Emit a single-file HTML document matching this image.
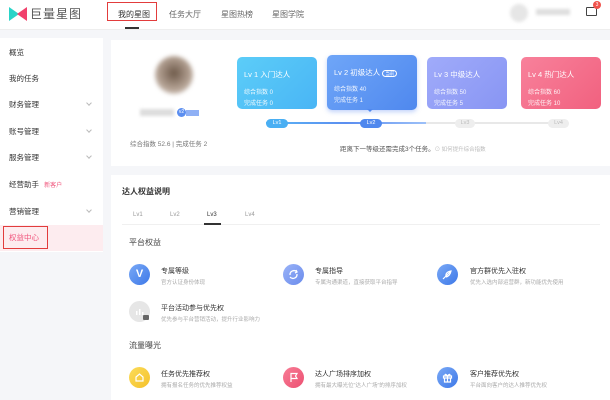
<!DOCTYPE html>
<html><head><meta charset="utf-8"><style>
*{margin:0;padding:0;box-sizing:border-box}
body{width:610px;height:400px;overflow:hidden;background:#f5f6f9;font-family:"Liberation Sans","Noto Sans CJK SC",sans-serif;color:#333;position:relative}
.abs{position:absolute}
.hdr{left:0;top:0;width:610px;height:30px;background:#fff;border-bottom:1px solid #eee}
.nav{font-size:8px;color:#666;top:9px}
.side{left:0;top:38px;width:103px;height:214px;background:#fff}
.si{position:absolute;left:9px;font-size:7.5px;color:#333}
.chev{position:absolute;left:87px;width:4px;height:4px;border-right:1px solid #bbb;border-bottom:1px solid #bbb;transform:rotate(45deg)}
.card{background:#fff}
.lv{border-radius:5px;color:#fff;font-size:7px}
.lv .t{position:absolute;left:7px;top:12px;font-size:7.5px}
.lv .a{position:absolute;left:7px;top:30px;font-size:6px;opacity:.9}
.lv .b{position:absolute;left:7px;top:41px;font-size:6px;opacity:.9}
.pill{height:9px;border-radius:5px;font-size:5.5px;text-align:center;line-height:9px;top:119px}
.ic{width:21px;height:21px;border-radius:50%}
.ic svg{position:absolute;left:5px;top:5px}
.it{font-size:7px;color:#333}
.id{font-size:5.5px;color:#aaa}
</style></head><body>
<div class="abs hdr"></div>
<svg class="abs" style="left:8px;top:6px" width="20" height="16" viewBox="0 0 20 16"><path d="M1 1 L11 8 L1 15 Z" fill="#2ad4c8"/><path d="M19 1 L9 8 L19 15 Z" fill="#f1416c"/></svg>
<div class="abs" style="left:30px;top:5px;font-size:12px;color:#555;letter-spacing:1px">巨量星图</div>
<div class="abs" style="left:107px;top:2px;width:50px;height:19px;border:1.5px solid #e23c3c"></div>
<div class="abs nav" style="left:118px;color:#333">我的星图</div>
<div class="abs" style="left:125px;top:27px;width:14px;height:2px;background:#333"></div>
<div class="abs nav" style="left:169px">任务大厅</div>
<div class="abs nav" style="left:221px">星图热榜</div>
<div class="abs nav" style="left:272px">星图学院</div>
<div class="abs" style="left:510px;top:4px;width:18px;height:18px;border-radius:50%;background:#e6e6e6;filter:blur(1.5px)"></div>
<div class="abs" style="left:536px;top:9px;width:34px;height:6px;background:#ddd;filter:blur(1.5px)"></div>
<div class="abs" style="left:586px;top:7px;width:11px;height:9px;border:1.3px solid #444;border-radius:1px"></div>
<div class="abs" style="left:593px;top:1px;width:8px;height:8px;border-radius:50%;background:#f0524c;color:#fff;font-size:5px;text-align:center;line-height:8px">3</div>

<div class="abs side"></div>
<div class="si" style="top:47px">概览</div>
<div class="si" style="top:73px">我的任务</div>
<div class="si" style="top:99px">财务管理</div><div class="chev" style="top:101px"></div>
<div class="si" style="top:126px">账号管理</div><div class="chev" style="top:128px"></div>
<div class="si" style="top:152px">服务管理</div><div class="chev" style="top:154px"></div>
<div class="si" style="top:179px">经营助手 <span style="font-size:6px;color:#f0527a;margin-left:3px">新客户</span></div>
<div class="si" style="top:206px">营销管理</div><div class="chev" style="top:208px"></div>
<div class="abs" style="left:0;top:225px;width:103px;height:26px;background:#fdecef"></div>
<div class="abs" style="left:3px;top:226px;width:45px;height:23px;border:1.5px solid #e23c3c"></div>
<div class="si" style="top:232px;color:#f0527a">权益中心</div>

<div class="abs card" style="left:111px;top:40px;width:499px;height:126px"></div>
<div class="abs" style="left:155px;top:56px;width:38px;height:38px;border-radius:50%;background:radial-gradient(circle at 50% 45%,#6e5a4a,#b8a698 60%,#eee);filter:blur(2px)"></div>
<div class="abs" style="left:140px;top:109px;width:34px;height:7px;background:#ddd;filter:blur(1.5px)"></div>
<div class="abs" style="left:177px;top:108px;width:9px;height:9px;border-radius:50%;background:#5b8ef0;color:#fff;font-size:5px;text-align:center;line-height:9px">v2</div>
<div class="abs" style="left:186px;top:110px;width:13px;height:6px;background:#8fb0f5"></div>
<div class="abs" style="left:130px;top:138px;font-size:6.5px;color:#777">综合指数 52.6 | 完成任务 2</div>

<div class="abs lv" style="left:237px;top:57px;width:80px;height:52px;background:linear-gradient(135deg,#5ccdf8,#49b5f5)"><div class="t">Lv 1 入门达人</div><div class="a">综合指数 0</div><div class="b">完成任务 0</div></div>
<div class="abs lv" style="left:327px;top:55px;width:90px;height:55px;background:linear-gradient(135deg,#6fa6f8,#4f88ee);box-shadow:0 2px 5px rgba(80,130,240,.35)"><div class="t">Lv 2 初级达人 <span style="border:1px solid #fff;border-radius:4px;font-size:4.5px;padding:0 2px">当前</span></div><div class="a" style="top:29px">综合指数 40</div><div class="b" style="top:40px">完成任务 1</div></div>
<div class="abs" style="left:367px;top:109px;width:0;height:0;border-left:3px solid transparent;border-right:3px solid transparent;border-top:3px solid #4f88ee"></div>
<div class="abs lv" style="left:427px;top:57px;width:80px;height:52px;background:linear-gradient(135deg,#a0abfa,#8895f3)"><div class="t">Lv 3 中级达人</div><div class="a">综合指数 50</div><div class="b">完成任务 5</div></div>
<div class="abs lv" style="left:521px;top:57px;width:80px;height:52px;background:linear-gradient(135deg,#f8819b,#f1617f)"><div class="t">Lv 4 热门达人</div><div class="a">综合指数 60</div><div class="b">完成任务 10</div></div>
<div class="abs" style="left:266px;top:122px;width:300px;height:2px;background:#e8e8e8"></div>
<div class="abs" style="left:266px;top:122px;width:160px;height:2px;background:linear-gradient(90deg,#5ab5f5,#5b8ef0,#9cc0f8)"></div>
<div class="abs pill" style="left:266px;width:22px;background:#4aaff3;color:#fff">Lv1</div>
<div class="abs pill" style="left:360px;width:22px;background:#4f88ee;color:#fff">Lv2</div>
<div class="abs pill" style="left:455px;width:20px;background:#eee;color:#bbb">Lv3</div>
<div class="abs pill" style="left:548px;width:21px;background:#eee;color:#bbb">Lv4</div>
<div class="abs" style="left:340px;top:143px;font-size:6.5px;color:#555">距离下一等级还需完成3个任务。<span style="color:#bbb;font-size:5.5px">⊙ 如何提升综合指数</span></div>

<div class="abs card" style="left:111px;top:175px;width:499px;height:225px"></div>
<div class="abs" style="left:122px;top:186px;font-size:8px;font-weight:bold;color:#333">达人权益说明</div>
<div class="abs" style="left:133px;top:212px;font-size:6px;color:#999">Lv1</div>
<div class="abs" style="left:170px;top:212px;font-size:6px;color:#999">Lv2</div>
<div class="abs" style="left:207px;top:212px;font-size:6px;color:#333">Lv3</div>
<div class="abs" style="left:245px;top:212px;font-size:6px;color:#999">Lv4</div>
<div class="abs" style="left:122px;top:224px;width:478px;height:1px;background:#f0f0f0"></div>
<div class="abs" style="left:204px;top:223px;width:17px;height:1.5px;background:#333"></div>
<div class="abs" style="left:129px;top:237px;font-size:8px;color:#444">平台权益</div>

<div class="abs ic" style="left:129px;top:264px;background:linear-gradient(135deg,#7aa9f6,#3d78e8);color:#fff;font-size:11px;text-align:center;line-height:21px;font-weight:bold">V</div>
<div class="abs it" style="left:161px;top:266px">专属等级</div><div class="abs id" style="left:161px;top:278px">官方认证身份体现</div>
<div class="abs ic" style="left:283px;top:264px;background:linear-gradient(135deg,#9ab3f8,#6a8bec)"><svg width="11" height="11" viewBox="0 0 11 11" fill="none" stroke="#fff" stroke-width="1.3"><path d="M2 6 A4 4 0 0 1 9 3 M9 5 A4 4 0 0 1 2 8"/><path d="M8 1 L9 3 L7 4"/></svg></div>
<div class="abs it" style="left:315px;top:266px">专属指导</div><div class="abs id" style="left:315px;top:278px">专属沟通渠道，直接获取平台指导</div>
<div class="abs ic" style="left:437px;top:264px;background:linear-gradient(135deg,#7aa9f6,#3d78e8)"><svg width="11" height="11" viewBox="0 0 11 11" fill="none" stroke="#fff" stroke-width="1.2"><path d="M1 10 L9 2 M4 8 Q3 3 9 2 Q8 7 4 8"/></svg></div>
<div class="abs it" style="left:470px;top:266px">官方群优先入驻权</div><div class="abs id" style="left:470px;top:278px">优先入选内部运营群，新功能优先使用</div>
<div class="abs ic" style="left:129px;top:301px;background:#e6e6e6"><svg width="11" height="11" viewBox="0 0 11 11" fill="#fff"><rect x="2" y="5" width="1.5" height="4"/><rect x="5" y="3" width="1.5" height="6"/><rect x="8" y="6" width="1.5" height="3"/></svg></div>
<div class="abs" style="left:143px;top:315px;width:6px;height:5px;background:#666;border-radius:1px"></div>
<div class="abs it" style="left:161px;top:303px">平台活动参与优先权</div><div class="abs id" style="left:161px;top:315px">优先参与平台营销活动，提升行业影响力</div>
<div class="abs" style="left:129px;top:340px;font-size:8px;color:#444">流量曝光</div>
<div class="abs ic" style="left:129px;top:367px;background:linear-gradient(135deg,#fbdc5a,#f5c12a)"><svg width="11" height="11" viewBox="0 0 11 11" fill="none" stroke="#fff" stroke-width="1.2"><path d="M2 5 L5.5 2 L9 5 V9 H2 Z"/></svg></div>
<div class="abs it" style="left:161px;top:369px">任务优先推荐权</div><div class="abs id" style="left:161px;top:381px">拥有报名任务的优先推荐权益</div>
<div class="abs ic" style="left:283px;top:367px;background:linear-gradient(135deg,#f87d96,#ec4f71)"><svg width="11" height="11" viewBox="0 0 11 11" fill="none" stroke="#fff" stroke-width="1.2"><path d="M3 10 V1.5 H9 L7.5 4 L9 6.5 H3"/></svg></div>
<div class="abs it" style="left:315px;top:369px">达人广场排序加权</div><div class="abs id" style="left:315px;top:381px">拥有最大曝光位"达人广场"的排序加权</div>
<div class="abs ic" style="left:437px;top:367px;background:linear-gradient(135deg,#7aa9f6,#3d78e8)"><svg width="11" height="11" viewBox="0 0 11 11" fill="none" stroke="#fff" stroke-width="1.2"><path d="M1.5 4 H9.5 V6 H1.5 Z M2.5 6 V10 H8.5 V6 M5.5 4 V10 M5.5 4 Q3 1 3 3.5 M5.5 4 Q8 1 8 3.5"/></svg></div>
<div class="abs it" style="left:470px;top:369px">客户推荐优先权</div><div class="abs id" style="left:470px;top:381px">平台面向客户的达人推荐优先权</div>
</body></html>
